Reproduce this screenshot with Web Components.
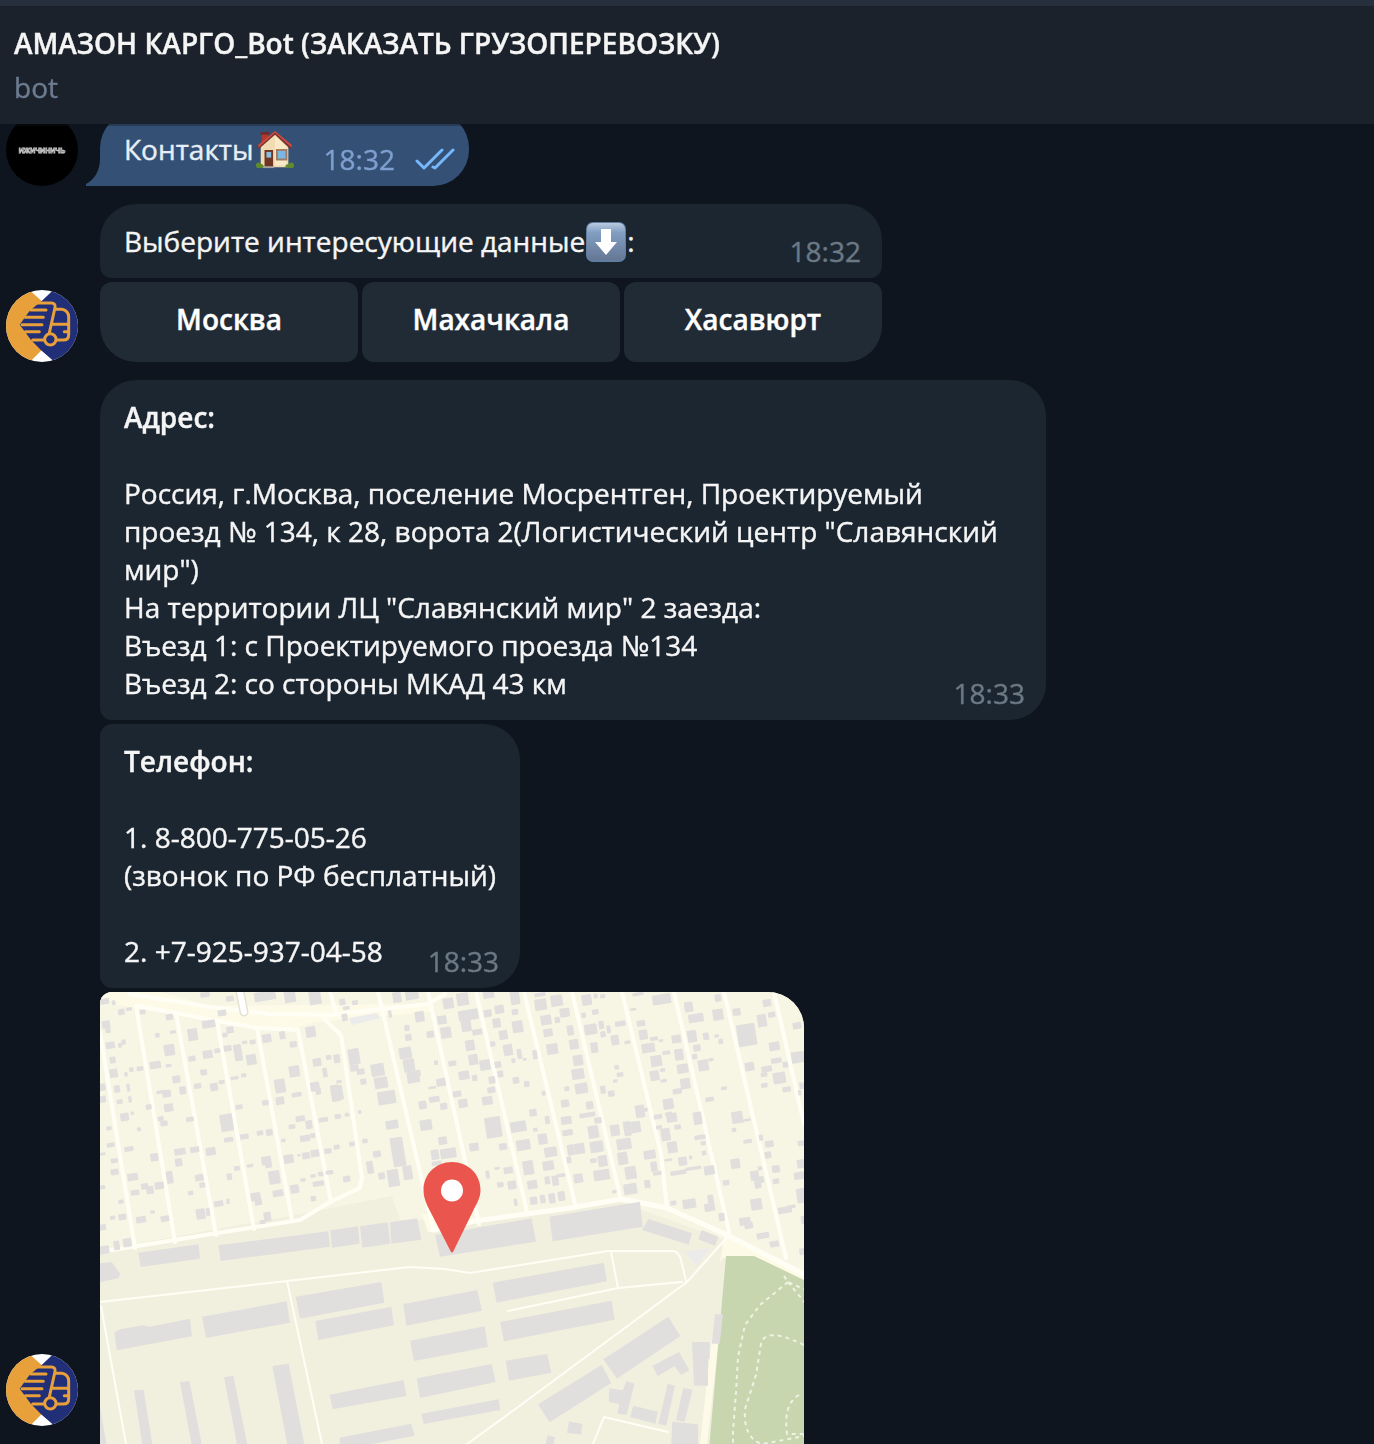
<!DOCTYPE html>
<html lang="ru">
<head>
<meta charset="utf-8">
<meta name="viewport" content="width=device-width, initial-scale=1">
<title>АМАЗОН КАРГО_Bot</title>
<style>
html,body{margin:0;height:100%;background:#0e151e}
body{font:400 28px/38px "Open Sans","Noto Sans",sans-serif;color:#f5f5f5;-webkit-text-stroke:.4px currentColor}
</style>
</head>
<body>
<chat-window></chat-window>
<script>
function define(name, html, setup) {
  const template = document.createElement('template');
  template.innerHTML = html;
  customElements.define(name, class extends HTMLElement {
    constructor() {
      super();
      this.attachShadow({mode: 'open'}).append(template.content.cloneNode(true));
    }
    connectedCallback() { if (setup) setup(this, this.shadowRoot); }
  });
}

define('chat-header', `
<style>
:host{display:block;background:#1b222b;border-top:6px solid #26303c;padding:18px 14px;position:relative;z-index:1;box-shadow:0 2px 0 rgba(14,21,30,.35)}
h1{margin:0 0 6px;font-size:28px;line-height:38px;font-weight:600}
p{margin:0;color:#6c7c91}
</style>
<h1><slot></slot></h1><p><slot name="status"></slot></p>`);

const avatars = {
  user: `<svg viewBox="0 0 72 72"><circle cx="36" cy="36" r="36" fill="#000"/><text x="36" y="39" text-anchor="middle" font-family="Liberation Sans, sans-serif" font-size="7" font-weight="700" fill="#000" stroke="#c8c8c8" stroke-width=".8">ИЖИЧИНИЧЬ</text></svg>`,
  cargo: `<svg viewBox="18 30 216 216"><defs><clipPath id="c"><circle cx="126" cy="138" r="108"/></clipPath></defs>
<g clip-path="url(#c)"><path fill="#fff" d="M18 30h216v216H18z"/>
<path fill="#e7a03a" d="M0 30h88l37 33-50 70 50 78-36 35H0z"/>
<path fill="#212e78" d="M160 30h90v216h-86l-39-34-32-32-34-46 30-42 36-29z"/>
<g fill="none" stroke="#e7a03a" stroke-width="9" stroke-linecap="round" stroke-linejoin="round">
<path d="M108 69h46q13 0 11 14l-18 80M92 90h46M76 112h54M66 134h60M76 155h42M98 180h34M164 88h22q20 4 20 24v52q0 16-16 16h-20M154 133h50M203 155h-10"/>
<circle cx="151" cy="178" r="17" fill="#212e78"/></g></g></svg>`
};
define('user-avatar', `<style>:host{display:block;flex:none;width:72px;height:72px;-webkit-text-stroke:0}svg{display:block;width:100%;height:100%}</style>`,
  (el, root) => root.append(document.createRange().createContextualFragment(avatars[el.getAttribute('kind')])));

define('message-group', `
<style>
:host{display:flex;align-items:flex-end;gap:22px;flex:none}
.stack{display:flex;flex-direction:column;align-items:flex-start;gap:4px;flex:0 1 auto;min-width:0}
::slotted(user-avatar){position:sticky;bottom:18px}
</style>
<slot name="avatar"></slot><div class="stack"><slot></slot></div>`);

define('message-bubble', `
<style>
:host{display:grid;box-sizing:border-box;padding:18px 24px;background:#1c2631;border-radius:12px 36px 36px 12px;position:relative}
:host([first]){border-top-left-radius:36px}
:host([keyboard]){border-bottom-right-radius:12px;width:100%}
:host([wide]){width:946px;max-width:100%}
:host([own]){background:#345075;display:flex;gap:28px;padding-right:14px;border-radius:36px 36px 36px 0;color:#e6eef6}
.text,.meta{grid-area:1/1}
.meta{align-self:end;justify-self:end;display:flex;gap:20px;align-items:center;margin:0 -3px -10px 0;color:#6b7985}
:host([own]) .meta{color:#7f9fcf;margin-right:0}
svg{display:none}
:host([own]) svg{display:block}
.tail{position:absolute;left:-14px;bottom:0}
</style>
<div class="text"><slot></slot></div>
<div class="meta"><slot name="time"></slot>
<svg width="40" height="24" viewBox="0 0 40 24" fill="none" stroke="#76b8fb" stroke-width="3" stroke-linecap="round" stroke-linejoin="round"><path d="M2 14l7 7L27 3M18 20l2 1L38 3"/></svg></div>
<svg class="tail" width="15" height="26" viewBox="0 0 15 26"><path fill="#345075" d="M14 0h1v26H0v-2Q13 17 14 0z"/></svg>`);

define('reply-keyboard', `
<style>
:host{display:flex;gap:4px;width:782px;max-width:100%}
::slotted(button){flex:1 1 0;height:80px;padding:0 0 6px;border:0;border-radius:12px;background:#202b36;color:#fff;font:600 28px/38px "Open Sans","Noto Sans",sans-serif}
::slotted(button:first-child){border-bottom-left-radius:36px}
::slotted(button:last-child){border-bottom-right-radius:36px}
</style><slot></slot>`);

const emoji = {
  house: `<svg viewBox="-1 -1 42 42"><path fill="#b03a2c" d="M6 2h7v11H6z"/><path fill="#702b2a" d="M5 1h9v3H5z"/>
<path fill="#f0dbb2" d="M5 15L20 3l14 12v23H5z"/><path fill="#fae9c7" d="M20 5l12 11v20H20z"/>
<path fill="#78322d" d="M20 0L1 16l2 3L20 4l16 15 2-3z"/><path fill="#d14b41" d="M20 0L2 15l1 2L20 2l17 15 1-2z"/>
<path fill="#6f3623" d="M9 20h9v18H9z"/><path fill="#8cbee0" d="M11 22h5v6h-5z"/><path fill="#a07b62" d="M21 19h12v12H21z"/><path fill="#7bb7e5" d="M23 21h8v8h-8z"/>
<path fill="#a8a59f" d="M7 37h12v2H7z"/><g fill="#5e8b2b"><circle cx="3" cy="36" r="3"/><circle cx="37" cy="36" r="3"/><circle cx="6" cy="37" r="2"/><circle cx="33" cy="37" r="2"/></g></svg>`,
  down: `<svg viewBox="0 0 40 40"><defs><linearGradient id="g" x2="0" y2="1"><stop stop-color="#b9cbe0"/><stop offset=".25" stop-color="#829fc2"/><stop offset="1" stop-color="#657795"/></linearGradient></defs>
<rect width="40" height="40" rx="7" fill="#5f7ea0"/><rect x="1" y="1" width="38" height="37" rx="6" fill="url(#g)"/><path fill="#fff" d="M15 7h10v13h6L20 33 9 20h6z"/></svg>`
};
define('emoji-icon', `<style>:host{display:inline-block;width:40px;height:38px;margin:0 1px;vertical-align:top}svg{display:block;width:40px;height:40px}</style>`,
  (el, root) => root.append(document.createRange().createContextualFragment(emoji[el.getAttribute('name')])));

/* Small buildings: centre x, centre y, width, height; each tile uses its own 3x grid. */
const houses = {
  west: `315 14 28 16;495 18 65 28;570 20 34 36;645 22 36 44;390 26 24 16;14 34 28 18;41 38 12 14;64 66 20 18;87 57 18 10;128 66 18 14;208 81 22 18;366 69 26 18;18 104 24 24;24 122 16 14;172 136 14 14;219 126 18 10;278 134 30 36;326 102 40 24;390 120 22 20;375 135 16 14;500 145 28 26;547 136 18 24;580 163 22 18;632 126 30 32;31 166 28 20;60 166 12 14;71 156 12 16;208 180 32 34;38 210 18 20;41 250 24 26;94 239 14 14;120 236 20 14;78 253 10 14;166 225 34 22;206 227 18 10;276 206 22 16;323 193 30 24;352 182 18 14;383 175 24 18;414 188 24 50;434 157 16 10;458 156 18 14;454 209 30 32;583 244 32 34;651 217 26 24;686 202 16 14;710 206 18 26;675 248 14 28;311 247 20 18;229 268 24 22;248 301 20 24;293 288 22 16;342 291 24 24;365 276 18 12;404 264 24 10;431 256 16 12;5 292 24 22;51 297 18 22;85 293 10 24;7 328 22 20;59 335 18 14;90 328 10 20;183 306 28 10;200 311 26 22;146 351 18 16;206 353 28 24;540 288 32 42;540 332 26 24;590 314 30 14;645 290 28 28;655 304 16 20;706 310 26 50;496 338 20 16;417 351 22 14;74 381 26 24;97 370 10 10;182 386 18 14;192 400 22 16;270 388 24 14;380 398 38 52;386 449 28 14;433 440 26 16;480 429 20 14;508 427 20 20;27 415 16 12;117 418 12 12;601 386 28 18;627 404 20 26;576 410 20 14;670 389 28 14;712 380 16 14;615 445 30 20;638 437 16 14;550 451 14 10;32 465 24 14;7 492 20 8;87 477 28 14;43 512 22 14;163 502 24 24;240 485 34 20;236 517 22 24;284 479 28 18;332 484 30 24;499 512 30 26;505 525 20 18;566 507 30 26;597 496 10 8;618 497 24 20;645 490 26 22;684 483 22 16;710 471 18 14;44 546 24 18;98 561 32 22;209 562 20 38;298 563 26 20;307 585 18 16;388 560 16 20;411 535 18 14;450 527 20 10;523 562 34 40;134 589 22 18;150 600 22 24;178 587 28 22;105 608 26 16;272 609 16 14;8 592 16 12;63 635 16 12;356 641 28 18;384 634 10 16;534 610 32 20;584 597 26 26;609 570 16 10;639 558 16 10;662 552 16 14;688 547 22 12;655 581 34 16;640 626 16 16;467 620 30 24;475 636 22 20;302 672 28 32;324 666 12 24;38 683 16 12;67 681 24 18;123 689 30 20;158 666 14 10;195 686 26 18;502 680 22 28;488 696 18 12;7 712 22 18;50 766 18 28;82 758 26 26;12 780 32 24`,
  mid: `201 22 26 32;246 16 40 26;37 36 18 20;75 38 18 14;49 54 20 12;44 82 18 22;180 72 10 22;269 80 28 32;355 40 32 32;398 28 36 38;415 75 60 32;409 108 30 34;336 90 28 26;348 128 32 34;301 133 22 20;442 126 30 18;231 114 16 18;235 142 20 20;420 166 28 32;430 209 28 32;318 218 12 14;367 220 24 16;402 256 32 26;434 264 16 18;476 14 34 22;473 70 24 22;508 58 28 26;555 24 28 40;555 66 20 18;500 99 24 28;520 135 26 28;563 110 32 36;488 162 16 16;534 180 28 34;568 192 14 30;584 208 12 8;550 212 12 14;615 194 14 28;632 44 36 34;680 32 36 34;704 68 24 26;648 90 32 30;682 90 16 18;654 128 28 24;630 14 34 12;667 177 34 32;465 225 32 32;504 224 20 20;511 252 18 20;486 270 20 22;484 300 24 18;472 332 32 26;558 271 20 20;590 282 16 18;641 310 12 14;710 297 14 12;609 368 22 22;704 340 22 22;708 392 28 20;72 200 34 48;73 234 26 20;92 245 24 18;100 275 18 18;21 205 18 22;22 309 34 44;27 275 16 10;143 240 40 38;153 278 40 34;170 323 54 40;226 189 38 34;237 226 34 40;250 262 38 34;262 250 20 20;333 277 28 24;307 293 24 8;313 328 32 18;278 345 24 24;341 349 22 20;381 312 26 18;399 340 28 26;288 405 36 32;186 404 38 26;25 380 18 12;51 374 14 12;89 366 10 12;66 462 18 14;20 471 16 12;105 453 16 14;204 486 38 88;233 548 28 42;190 564 34 52;155 558 20 20;141 492 24 20;120 532 20 38;50 567 22 18;3 547 14 12;338 452 26 24;315 494 24 30;355 490 48 30;320 520 30 14;432 471 28 24;490 412 48 62;565 410 48 32;519 470 24 20;580 465 42 32;638 447 28 32;616 419 14 12;652 390 14 24;662 486 38 30;710 428 24 16;655 527 34 28;595 533 32 42;535 541 28 20;501 535 16 8;473 554 12 24;511 584 20 16;546 585 26 26;607 584 30 26;652 571 16 24;676 572 20 30;692 556 26 10;557 637 10 22;611 632 22 24;638 627 16 26;666 625 20 30;694 619 20 28`,
  east: `80 30 30 32;107 18 12 14;128 19 16 12;106 66 20 16;71 76 14 16;14 68 30 26;92 118 38 32;124 105 16 24;129 133 16 18;146 118 12 24;181 101 32 16;165 150 24 30;202 157 18 10;103 173 22 32;31 121 20 30;42 163 28 30;54 211 30 32;54 252 38 32;64 295 38 32;21 296 14 14;129 299 16 24;154 311 20 18;170 232 14 14;180 254 20 14;166 273 14 10;234 12 34 10;220 58 18 8;305 28 56 30;386 51 26 30;408 84 46 26;474 24 20 22;474 74 32 34;243 100 26 18;250 134 26 30;265 174 40 28;282 146 24 12;303 152 14 8;319 188 24 12;289 213 34 34;284 257 28 30;308 240 16 10;311 272 20 10;349 147 28 24;396 139 28 36;357 194 26 34;368 236 34 28;376 281 30 32;352 304 28 16;411 174 22 20;404 200 16 16;430 226 32 34;453 209 16 10;438 139 18 22;470 138 14 10;482 154 14 16;492 295 18 10;449 328 26 14;530 66 24 22;560 135 56 66;606 92 28 38;635 74 22 16;621 39 26 22;643 169 32 26;711 107 26 20;714 202 40 34;569 230 28 26;620 237 32 18;612 254 20 14;649 212 32 16;676 224 16 18;658 264 38 34;613 286 20 14;680 298 26 16;725 287 14 20;719 308 10 16;16 341 24 20;89 346 22 24;82 375 48 14;19 391 32 24;114 391 22 18;23 428 32 18;165 421 28 34;202 416 22 44;227 411 30 34;192 462 44 34;188 505 30 38;212 548 34 38;211 597 40 32;240 364 28 38;256 359 14 12;325 342 32 32;294 380 26 14;335 383 32 28;326 371 22 10;297 412 18 12;317 434 28 38;337 472 30 34;353 411 20 14;269 494 36 26;282 530 20 30;292 550 26 12;368 514 26 26;325 510 24 8;392 502 10 12;413 385 26 38;532 382 34 36;560 390 26 8;522 420 14 12;563 454 26 12;420 442 34 14;430 460 16 12;432 489 14 14;603 443 12 18;628 462 26 20;624 495 20 20;723 460 20 16;526 521 28 30;600 535 14 12;648 537 24 22;725 521 28 26;584 557 26 30;597 570 30 20;594 586 20 18;648 574 20 16;718 557 32 22;355 548 48 14;400 535 48 10;448 541 32 28;498 578 20 16;32 480 20 32;58 476 32 32;100 426 32 38;110 470 40 34;128 513 28 34;100 512 20 14;27 510 14 20;55 565 28 28;125 555 48 32;7 556 18 10;5 618 20 28;163 605 14 10;262 582 18 24;340 639 18 14;388 641 40 28;452 629 18 30;449 652 32 24;485 681 18 24;589 643 34 34;675 660 42 20;694 650 26 10;724 617 28 44;730 690 14 24;555 694 34 24;566 706 26 20;609 737 38 18;643 762 28 18;726 785 16 20`
};
const rects = s => s.split(';').map(r => {
  const [x, y, w, h] = r.split(' ').map(Number);
  return `<rect x="${x - w / 2}" y="${y - h / 2}" width="${w}" height="${h}" rx="3" transform="rotate(-9 ${x} ${y})"/>`;
}).join('');

define('location-map', `
<style>
:host{display:block;width:704px;max-width:100%;border-radius:12px 36px 0 0;overflow:hidden;background:#f1f0df}
a,svg{display:block;width:100%}
</style>
<a href="#map" aria-label="Карта"><svg viewBox="0 0 704 480">
<path fill="#f7f5e4" d="M0 0h704v290L620 246 520 210 330 236 324 228 300 228 292 204 190 224 0 258z"/>
<path fill="#fdfbe8" d="M0 0L60 0 110 14 330 12 330 20 215 30 190 38 140 34 0 10z"/>
<path fill="#fdfbe8" d="M322 222h16v18h-10zM625 240l79 40v12l-51-26h-30l-3 4zM612 345l8-10-13 117H600z"/>
<path fill="#c8d6b0" d="M626 264h28l50 24v192h-97z"/>
<path fill="#ebebeb" d="M249 26l28-5 3 5-28 7zM584 260l26-4-13 18z"/>
<g fill="none" stroke="#fffef5" stroke-linejoin="round" stroke-linecap="round">
<path stroke-width="4" d="M0 260L130 239 200 228 230 210 260 196 262 186 241 43 223 26"/>
<path stroke-width="4" d="M30 2L110 15 170 22 230 23 328 12 345 2M36 14L76 21 117 29 157 36 198 38M36 14L75 250M76 21L116 243M117 29L154 237M157 36L192 228M198 38L231 210M0 40L35 256M230 0L236 20"/>
<path stroke-width="4" d="M278 0L333 236M328 0L379 232M376 0L427 220M424 0L475 212M472 0L521 208M522 0L561 162 567 216M574 0L630 244M624 0L686 266M674 0L704 132"/>
<path stroke-width="5" d="M333 238L375 229 470 216 522 207 567 216 625 242 704 282"/>
<path stroke="#e4e3d6" stroke-width="9" d="M140 0l4 20"/><path stroke="#fff" stroke-width="6" d="M140 0l4 20"/>
<path stroke-width="2" d="M0 310L187 289 310 275 345 277 370 281 508 259H573Q579 260 581 268L586 289M511 260l7 36M408 319L518 296 582 290M630 242L587 290 414 418 367 452 340 470M187 289L222 452 228 480M1 314L26 452 31 480M493 452l11-27 64 15"/>
</g>
<g fill="none" stroke="#edf3e2" stroke-width="2" stroke-dasharray="4 4"><path d="M684 284l4 6 20 9M688 290l18 22M688 290L660 313 645 333 638 365 636 400 633 440v40M704 353Q665 334 661 352L656 383 645 417Q643 446 662 452L704 444M699 403Q683 412 687 442h17"/></g>
<g fill="#e1dfdd">
<g transform="translate(0 -2) scale(.33333)">${rects(houses.west)}</g>
<g transform="translate(230 -2) scale(.33333)">${rects(houses.mid)}</g>
<g transform="translate(460 -2) scale(.33333)">${rects(houses.east)}</g>
<g transform="translate(0 228) scale(.33333)"><path d="M115 98l181-25 4 43-178 25zM355 76l330-42 5 46-328 43zM691 31l83-12 5 52-83 12zM780 19l83-12 8 64-84 12zM870 7l82-12 12 64-90 12zM0 130l35-4 25 34-3 14-57 12zM43 338l16-10 70-12 20 4 121-24 6 53-226 42zM306 290l254-46 10 64-252 46zM587 230l257-44 9 62-253 48zM646 303l228-43 8 56-227 44zM102 511l29-2 38 240-30 5zM240 487l28-5 50 255-30 8zM372 472l28-5 55 270-30 8zM517 438l49-7 60 310-50 8zM0 560l40 230H0zM689 524l222-44 8 48-221 40zM718 653l216-42 10 36-222 43z"/></g>
<g transform="translate(340 228) scale(.33333)"><path d="M-15 45L275-5 288 65 0 110zM328-10L600-55 608 20 338 64zM625-3l131 43-10 34-140-44zM785 30l50 20-10 28-50-20zM158 188l333-60 10 56-331 64zM180 306l335-64 9 57-332 65zM-110 252L112 210l14 62-227 45zM-90 362L134 319l10 62-222 42zM-70 475L155 432l12 54-227 48zM-56 581L176 538l5 32-230 42zM197 422l125-20 12 56-127 24zM490 418L685 290l36 58-190 128zM294 553L485 435l29 54-185 118zM637 438l80-43 31 56-25 14-20-26-50 30zM756 366h53v52h-5v79h-42zM825 283h24l-10 88h-24zM508 505l40 6 12-28 24 8-24 94-28-4 6-28-32-8zM580 557l74 18-8 36-76-20zM683 491l22 6-26 120-24-6zM730 503l28 6-24 96-26-4zM697 605l77 8v140h-84zM387 604l40 8-4 32-42-6zM323 646l22 6-20 90-24-6z"/></g>
</g>
<path fill="#ea554d" d="M352 170c-16 0-28.500 12-28.500 28 0 8 3 14 6 20l21 41q1.500 3 3 0l20-41c3-6 7-12 7-20 0-16-12.500-28-28.500-28z"/><circle cx="352" cy="198.500" r="11" fill="#fff"/>
</svg></a>`);

define('chat-window', `
<style>
:host{display:flex;flex-direction:column;height:100vh}
main{flex:1;min-height:0;overflow:hidden;display:flex;flex-direction:column;gap:18px;padding:0 6px}
.partly{margin-top:-12px}
b{font-weight:600}
</style>
<chat-header>АМАЗОН КАРГО_Bot (ЗАКАЗАТЬ ГРУЗОПЕРЕВОЗКУ)<span slot="status">bot</span></chat-header>
<main>
<message-group class="partly"><user-avatar slot="avatar" kind="user"></user-avatar>
<message-bubble own>Контакты<emoji-icon name="house" role="img" aria-label="дом"></emoji-icon><time slot="time">18:32</time></message-bubble></message-group>
<message-group><user-avatar slot="avatar" kind="cargo"></user-avatar>
<message-bubble first keyboard>Выберите интересующие данные<emoji-icon name="down" role="img" aria-label="вниз"></emoji-icon>:<time slot="time">18:32</time></message-bubble>
<reply-keyboard><button type="button">Москва</button><button type="button">Махачкала</button><button type="button">Хасавюрт</button></reply-keyboard></message-group>
<message-group><user-avatar slot="avatar" kind="cargo"></user-avatar>
<message-bubble first wide><b>Адрес:</b><br><br>Россия, г.Москва, поселение Мосрентген, Проектируемый<br>проезд № 134, к 28, ворота 2(Логистический центр "Славянский<br>мир")<br>На территории ЛЦ "Славянский мир" 2 заезда:<br>Въезд 1: с Проектируемого проезда №134<br>Въезд 2: со стороны МКАД 43 км<time slot="time">18:33</time></message-bubble>
<message-bubble><b>Телефон:</b><br><br>1. 8-800-775-05-26<br>(звонок по РФ бесплатный)<br><br>2. +7-925-937-04-58<time slot="time">18:33</time></message-bubble>
<location-map></location-map></message-group>
</main>`);
</script>
</body>
</html>
